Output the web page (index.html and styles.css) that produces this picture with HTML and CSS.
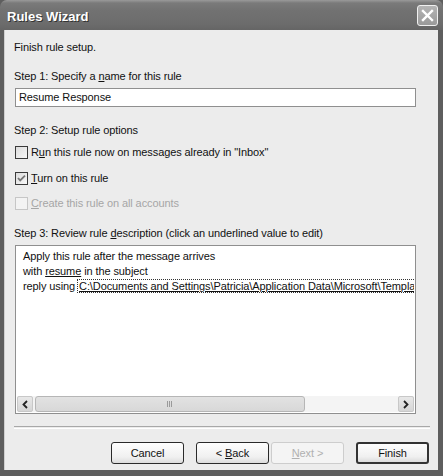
FILE: index.html
```html
<!DOCTYPE html>
<html>
<head>
<meta charset="utf-8">
<link rel="stylesheet" href="styles.css">
</head>
<body>
<div class="window">
  <div class="titlebar">
    <span class="title">Rules Wizard</span>
    <span class="close">
      <svg width="13" height="13" viewBox="0 0 13 13"><path d="M2 2 L11 11 M11 2 L2 11" stroke="#fff" stroke-width="2.4" stroke-linecap="square"/></svg>
    </span>
  </div>
  <div class="client">
    <div class="text first">Finish rule setup.</div>
    <div class="text step1">Step 1: Specify a <u>n</u>ame for this rule</div>
    <div class="input">Resume Response</div>
    <div class="text step2">Step 2: Setup rule options</div>
    <div class="check row1"><span class="box"></span><span>R<u>u</u>n this rule now on messages already in "Inbox"</span></div>
    <div class="check row2"><span class="box checked"><svg width="11" height="11" viewBox="0 0 11 11"><path d="M2 5 L4.2 7.4 L9 2.6" fill="none" stroke="#777" stroke-width="1.8"/></svg></span><span><u>T</u>urn on this rule</span></div>
    <div class="check row3 disabled"><span class="box"></span><span><u>C</u>reate this rule on all accounts</span></div>
    <div class="text step3">Step 3: Review rule <u>d</u>escription (click an underlined value to edit)</div>
    <div class="desc">
      <div class="desc-body">
        <div class="line">Apply this rule after the message arrives</div>
        <div class="line">with <u>resume</u> in the subject</div>
        <div class="line">reply using <span class="path"><u>C:\Documents and Settings\Patricia\Application Data\Microsoft\Templates\Resume Response.oft</u></span></div>
      </div>
      <div class="hscroll">
        <span class="arrow"><svg width="8" height="9" viewBox="0 0 8 9"><path d="M6 1 L2.5 4.5 L6 8" fill="none" stroke="#222" stroke-width="1.8"/></svg></span>
        <span class="thumb"><span class="grip"></span></span>
        <span class="track"></span>
        <span class="arrow"><svg width="8" height="9" viewBox="0 0 8 9"><path d="M2 1 L5.5 4.5 L2 8" fill="none" stroke="#222" stroke-width="1.8"/></svg></span>
      </div>
    </div>
    <div class="separator"></div>
    <div class="buttons">
      <span class="btn"><span>Cancel</span></span>
      <span class="btn back"><span>&lt; <u>B</u>ack</span></span>
      <span class="btn disabled"><span><u>N</u>ext &gt;</span></span>
      <span class="btn finish"><span>Finish</span></span>
    </div>
  </div>
</div>
</body>
</html>
```
FILE: styles.css
```css
html, body { margin: 0; padding: 0; }
body { width: 443px; height: 476px; overflow: hidden; background: #3c3c3c; }
.window {
  width: 443px; height: 476px;
  display: flex; flex-direction: column;
  background: #5e5e5e;
  font-family: "Liberation Sans", Arial, sans-serif;
  font-size: 11px;
  letter-spacing: -0.1px;
  color: #111;
}
.titlebar {
  height: 30px; flex: none;
  display: flex; align-items: center; justify-content: space-between;
  padding: 0 5px 0 7px;
  background: linear-gradient(#9a9a9a 0px, #7a7a7a 3px, #727272 10px, #6c6c6c 24px, #656565 30px);
  border-radius: 7px 7px 0 0;
  box-sizing: border-box;
}
.title {
  color: #fff; font-weight: bold; font-size: 13px;
  letter-spacing: 0;
  font-family: "Liberation Sans", Arial, sans-serif;
  text-shadow: 1px 1px 0 #333;
  padding-top: 2px;
}
.close {
  width: 19px; height: 19px;
  border: 1px solid #f0f0f0; border-radius: 3px;
  background: linear-gradient(#b4b4b4, #9a9a9a);
  display: flex; align-items: center; justify-content: center;
}
.client {
  flex: 1;
  margin: 0 5px 6px 4px;
  background: #ececec;
  border-left: 1px solid #cfcfcf;
  padding: 0 8px 0 9px;
  display: flex; flex-direction: column;
}
.text { height: 14px; line-height: 14px; white-space: nowrap; }
.first { margin-top: 10px; }
.step1 { margin-top: 15px; }
.input {
  margin-top: 5px; margin-left: 1px;
  width: 401px; height: 19px; box-sizing: border-box;
  border: 1px solid #8f8f8f; background: #fff;
  line-height: 17px; padding-left: 3px;
}
.step2 { margin-top: 16px; }
.check { display: flex; align-items: center; gap: 3px; height: 14px; white-space: nowrap; margin-left: 1px; }
.row1 { margin-top: 8px; }
.row2 { margin-top: 12px; }
.row3 { margin-top: 11px; }
.box {
  width: 13px; height: 13px; box-sizing: border-box;
  border: 1px solid #3a3a3a; background: linear-gradient(135deg, #dcdcdc, #f8f8f8);
  display: flex; align-items: center; justify-content: center;
}
.disabled { color: #a6a6a6; }
.check.disabled .box { border-color: #c6c6c6; background: #f3f3f3; }
.step3 { margin-top: 16px; }
.desc {
  margin-top: 5px; margin-left: 1px;
  width: 401px; height: 169px; box-sizing: border-box;
  border: 1px solid #8f8f8f; background: #fff;
  display: flex; flex-direction: column;
  padding: 1px;
}
.desc-body { flex: 1; padding: 2px 0 0 6px; overflow: hidden; }
.line { height: 15px; line-height: 15px; white-space: nowrap; }
.path { outline: 1px dotted #333; outline-offset: 0px; padding: 0 1px; }
.hscroll { height: 16px; display: flex; background: #f4f4f4; }
.arrow {
  width: 16px; height: 16px; box-sizing: border-box;
  border: 1px solid #c8c8c8; border-radius: 2px;
  background: linear-gradient(#e8e8e8, #d6d6d6);
  display: flex; align-items: center; justify-content: center;
}
.thumb {
  width: 270px; margin-left: 2px; box-sizing: border-box;
  border: 1px solid #b6b6b6; border-radius: 3px;
  background: linear-gradient(#e2e2e2, #d8d8d8);
  display: flex; align-items: center; justify-content: center;
}
.grip { width: 6px; height: 6px; background: repeating-linear-gradient(90deg, #9a9a9a 0 1px, transparent 1px 2px); }
.track { flex: 1; }
.separator {
  margin-top: 12px; height: 1px; width: 416px;
  border-top: 1px solid #a8a8a8; border-bottom: 1px solid #fff;
}
.buttons { margin-top: 13px; display: flex; justify-content: flex-end; padding-right: 1px; }
.btn {
  width: 73px; height: 22px; box-sizing: border-box;
  border: 1px solid #2a2a2a; border-radius: 3px;
  background: linear-gradient(#fefefe, #f0f0f0 70%, #dcdcdc);
  display: flex; align-items: center; justify-content: center;
}
.btn.back { margin-left: 12px; }
.btn.disabled { margin-left: 2px; }
.btn.finish { margin-left: 12px; border-width: 2px; border-color: #333; }
.btn.disabled { border-color: #cdcdcd; background: #f4f4f4; color: #b0b0b0; }
```
